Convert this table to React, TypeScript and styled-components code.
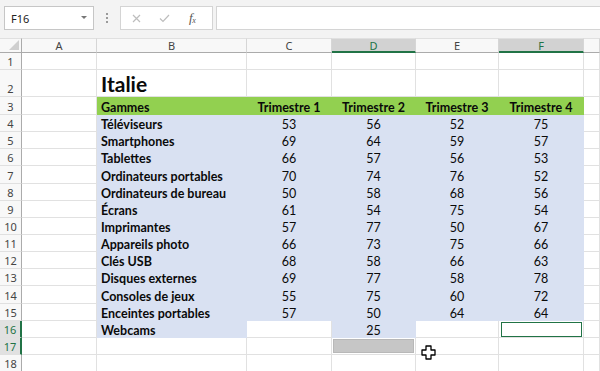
import React from "react";
import styled, { createGlobalStyle, css } from "styled-components";

const GlobalStyle = createGlobalStyle`
  html, body { margin: 0; padding: 0; background: #fff; overflow: hidden; }
  body { width: 600px; height: 371px; font-family: "Noto Sans", "DejaVu Sans", sans-serif; }
`;

const Window = styled.div`
  width: 600px;
  height: 371px;
  overflow: hidden;
  display: flex;
  flex-direction: column;
  background: #fff;
  position: relative;
`;

const FormulaBar = styled.div`
  flex: none;
  height: 38px;
  box-sizing: border-box;
  background: #f3f3f3;
  display: flex;
  align-items: flex-start;
  padding: 6px 0 0 4px;
`;

const NameBox = styled.div`
  width: 90px;
  height: 24px;
  box-sizing: border-box;
  border: 1px solid #c6c6c6;
  background: #fff;
  display: flex;
  align-items: center;
  justify-content: space-between;
  padding: 0 6px 0 6px;
  font-size: 11px;
  color: #222;
`;

const Caret = styled.span`
  width: 0;
  height: 0;
  border-left: 3px solid transparent;
  border-right: 3px solid transparent;
  border-top: 3px solid #777;
  margin-bottom: 2px;
`;

const Grip = styled.div`
  width: 2px;
  height: 12px;
  margin: 6px 12px 0 12px;
  background-image: radial-gradient(circle, #9a9a9a 0.9px, transparent 1.1px);
  background-size: 2px 4px;
`;

const FxBox = styled.div`
  width: 93px;
  height: 24px;
  box-sizing: border-box;
  border: 1px solid #d4d4d4;
  background: #fff;
  display: flex;
  align-items: center;
  padding-left: 11px;
  gap: 18px;
`;

const FxLabel = styled.span`
  font-family: "Liberation Serif", "DejaVu Serif", serif;
  font-style: italic;
  font-size: 13px;
  color: #555;
  letter-spacing: -0.5px;
  margin-left: 1px;
  sub {
    font-size: 8px;
    vertical-align: -1px;
  }
`;

const InputBox = styled.div`
  flex: 1;
  height: 24px;
  margin-left: 3px;
  box-sizing: border-box;
  border: 1px solid #d4d4d4;
  border-right: none;
  background: #fff;
`;

const Sheet = styled.div`
  flex: none;
  display: grid;
  grid-template-columns: 22px 75px 150px 85px 84px 83px 85px 16px;
  grid-template-rows: 15px 17px 27px 18px repeat(15, 17.15px);
  font-family: "Lato", "Liberation Sans", sans-serif;
`;

const Corner = styled.div`
  box-sizing: border-box;
  background: #f8f8f8;
  border-right: 1px solid #ababab;
  border-bottom: 1px solid #ababab;
  border-top: 1px solid #e0e0e0;
  position: relative;
  &::after {
    content: "";
    position: absolute;
    right: 2px;
    bottom: 2px;
    width: 0;
    height: 0;
    border-left: 10px solid transparent;
    border-bottom: 10px solid #cfcfcf;
  }
`;

const ColHeader = styled.div<{ $sel?: boolean }>`
  box-sizing: border-box;
  background: #f8f8f8;
  border-top: 1px solid #e0e0e0;
  border-right: 1px solid #d6d6d6;
  border-bottom: 1px solid #ababab;
  font-family: "Noto Sans", sans-serif;
  font-size: 11px;
  line-height: 13px;
  color: #444;
  display: flex;
  justify-content: center;
  align-items: center;
  ${(p) =>
    p.$sel &&
    css`
      background: #d2d2d2;
      color: #217346;
      border-bottom: 2px solid #217346;
    `}
`;

const RowHeader = styled.div<{ $sel?: boolean }>`
  box-sizing: border-box;
  background: #f8f8f8;
  border-right: 1px solid #ababab;
  border-bottom: 1px solid #e0e0e0;
  font-family: "Noto Sans", sans-serif;
  font-size: 11px;
  line-height: 13px;
  color: #444;
  display: flex;
  justify-content: center;
  align-items: flex-end;
  padding-bottom: 1px;
  ${(p) =>
    p.$sel &&
    css`
      background: #e1e1e1;
      color: #217346;
      border-right: 2px solid #217346;
    `}
`;

type Fill = "none" | "blue" | "green";
const fills: Record<Fill, string> = { none: "#fff", blue: "#d9e1f2", green: "#92d050" };

const Cell = styled.div<{
  $fill: Fill;
  $bold?: boolean;
  $center?: boolean;
  $title?: boolean;
  $active?: boolean;
  $marked?: boolean;
}>`
  box-sizing: border-box;
  position: relative;
  background: ${(p) => fills[p.$fill]};
  border-right: 1px solid ${(p) => (p.$fill === "none" ? "#e1e1e1" : fills[p.$fill])};
  border-bottom: 1px solid ${(p) => (p.$fill === "none" ? "#e1e1e1" : fills[p.$fill])};
  display: flex;
  align-items: flex-end;
  justify-content: ${(p) => (p.$center ? "center" : "flex-start")};
  padding: 0 4px 0 4px;
  font-size: ${(p) => (p.$title ? "21px" : "12.5px")};
  line-height: ${(p) => (p.$title ? "24px" : "13px")};
  font-weight: ${(p) => (p.$bold || p.$title ? 700 : 400)};
  color: #0a0a0a;
  white-space: nowrap;
  ${(p) =>
    p.$active &&
    css`
      &::after {
        content: "";
        position: absolute;
        left: 2px;
        right: 1px;
        top: 1px;
        bottom: 0px;
        border: 1px solid #217346;
      }
    `}
  ${(p) =>
    p.$marked &&
    css`
      &::after {
        content: "";
        position: absolute;
        left: 1px;
        right: 1px;
        top: 1px;
        bottom: 1px;
        background: #c6c6c6;
        border: 1px solid #b8b8b8;
      }
    `}
`;

const Cursor = styled.svg`
  position: absolute;
  left: 421px;
  top: 345px;
`;

const data: [string, number, number, number, number][] = [
  ["Téléviseurs", 53, 56, 52, 75],
  ["Smartphones", 69, 64, 59, 57],
  ["Tablettes", 66, 57, 56, 53],
  ["Ordinateurs portables", 70, 74, 76, 52],
  ["Ordinateurs de bureau", 50, 58, 68, 56],
  ["Écrans", 61, 54, 75, 54],
  ["Imprimantes", 57, 77, 50, 67],
  ["Appareils photo", 66, 73, 75, 66],
  ["Clés USB", 68, 58, 66, 63],
  ["Disques externes", 69, 77, 58, 78],
  ["Consoles de jeux", 55, 75, 60, 72],
  ["Enceintes portables", 57, 50, 64, 64],
];

const cols = ["A", "B", "C", "D", "E", "F", "G"];
const selCols = ["D", "F"];

export default function App() {
  const rows: React.ReactNode[] = [];

  const blankRow = (r: number, sel = false, extra?: (c: string) => Partial<React.ComponentProps<typeof Cell>>) => {
    rows.push(
      <RowHeader key={`h${r}`} $sel={sel}>
        {r}
      </RowHeader>
    );
    cols.forEach((c) => {
      const props = extra ? extra(c) : {};
      rows.push(<Cell key={`${c}${r}`} $fill="none" {...props} />);
    });
  };

  blankRow(1);

  rows.push(<RowHeader key="h2">2</RowHeader>);
  cols.forEach((c) =>
    rows.push(
      <Cell key={`${c}2`} $fill="none" $title={c === "B"}>
        {c === "B" ? "Italie" : null}
      </Cell>
    )
  );

  rows.push(<RowHeader key="h3">3</RowHeader>);
  const head: Record<string, string> = {
    B: "Gammes",
    C: "Trimestre 1",
    D: "Trimestre 2",
    E: "Trimestre 3",
    F: "Trimestre 4",
  };
  cols.forEach((c) =>
    rows.push(
      <Cell
        key={`${c}3`}
        $fill={head[c] ? "green" : "none"}
        $bold
        $center={c !== "B" && !!head[c]}
      >
        {head[c] ?? null}
      </Cell>
    )
  );

  data.forEach((d, i) => {
    const r = i + 4;
    rows.push(<RowHeader key={`h${r}`}>{r}</RowHeader>);
    cols.forEach((c, ci) => {
      if (c === "A" || c === "G") {
        rows.push(<Cell key={`${c}${r}`} $fill="none" />);
      } else if (c === "B") {
        rows.push(
          <Cell key={`${c}${r}`} $fill="blue" $bold>
            {d[0]}
          </Cell>
        );
      } else {
        rows.push(
          <Cell key={`${c}${r}`} $fill="blue" $center>
            {d[ci - 1]}
          </Cell>
        );
      }
    });
  });

  rows.push(
    <RowHeader key="h16" $sel>
      16
    </RowHeader>
  );
  cols.forEach((c) => {
    if (c === "B")
      rows.push(
        <Cell key="B16" $fill="blue" $bold>
          Webcams
        </Cell>
      );
    else if (c === "D")
      rows.push(
        <Cell key="D16" $fill="blue" $center>
          25
        </Cell>
      );
    else rows.push(<Cell key={`${c}16`} $fill="none" $active={c === "F"} />);
  });

  blankRow(17, true, (c) => ({ $marked: c === "D" }));
  blankRow(18);

  return (
    <Window>
      <GlobalStyle />
      <FormulaBar>
        <NameBox>
          <span>F16</span>
          <Caret />
        </NameBox>
        <Grip />
        <FxBox>
          <svg width="9" height="9" viewBox="0 0 9 9">
            <path d="M1 1 L8 8 M8 1 L1 8" stroke="#bdbdbd" strokeWidth="1.2" fill="none" />
          </svg>
          <svg width="11" height="9" viewBox="0 0 11 9">
            <path d="M1 4.5 L4 7.5 L10 1" stroke="#bdbdbd" strokeWidth="1.2" fill="none" />
          </svg>
          <FxLabel>
            f<sub>x</sub>
          </FxLabel>
        </FxBox>
        <InputBox />
      </FormulaBar>
      <Sheet>
        <Corner />
        {cols.map((c) => (
          <ColHeader key={c} $sel={selCols.includes(c)}>
            {c === "G" ? "" : c}
          </ColHeader>
        ))}
        {rows}
      </Sheet>
      <Cursor width="15" height="15" viewBox="0 0 15 15">
        <path
          d="M5 1 H10 V5 H14 V10 H10 V14 H5 V10 H1 V5 H5 Z"
          fill="#fff"
          stroke="#000"
          strokeWidth="1.3"
          strokeLinejoin="round"
        />
      </Cursor>
    </Window>
  );
}
